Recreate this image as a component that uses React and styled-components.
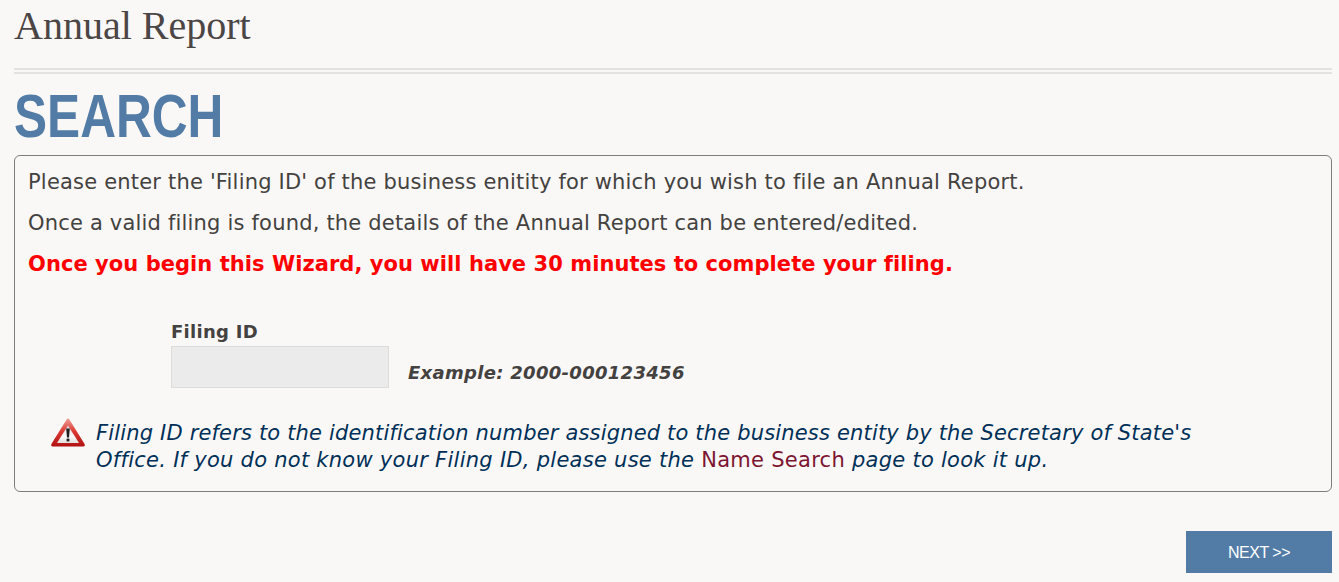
import React from "react";
import styled, { createGlobalStyle } from "styled-components";

const GlobalStyle = createGlobalStyle`
  html, body {
    margin: 0;
    padding: 0;
    background: #faf8f7;
  }
  body {
    font-family: "DejaVu Sans", Verdana, sans-serif;
    color: #444240;
  }
`;

const WarningIcon = () => (
  <svg width="36" height="31" viewBox="0 0 36 31">
    <defs>
      <linearGradient id="warnEdge" x1="0" y1="0" x2="0" y2="1">
        <stop offset="0" stopColor="#f0a09a" />
        <stop offset="0.45" stopColor="#dc3a34" />
        <stop offset="1" stopColor="#b01210" />
      </linearGradient>
      <linearGradient id="warnFill" x1="0" y1="0" x2="0" y2="1">
        <stop offset="0" stopColor="#d8d4d4" />
        <stop offset="0.6" stopColor="#fbfafa" />
        <stop offset="1" stopColor="#e4dede" />
      </linearGradient>
    </defs>
    <path d="M18 1.5 Q18.8 1.5 19.4 2.6 L34.6 27 Q35.4 29.5 33 29.5 L3 29.5 Q0.6 29.5 1.4 27 L16.6 2.6 Q17.2 1.5 18 1.5 Z" fill="url(#warnEdge)" />
    <path d="M18 8.5 L29 26 L7 26 Z" fill="url(#warnFill)" />
    <path d="M16.2 11.5 L19.8 11.5 L19 20.5 L17 20.5 Z" fill="#1e1e1e" />
    <rect x="16.6" y="21.6" width="2.8" height="2.8" fill="#1e1e1e" />
  </svg>
);

const App = () => (
  <Page>
    <GlobalStyle />
    <PageTitle>Annual Report</PageTitle>
    <DoubleRule />
    <SectionTitle>SEARCH</SectionTitle>
    <Panel>
      <Line>Please enter the 'Filing ID' of the business enitity for which you wish to file an Annual Report.</Line>
      <Line>Once a valid filing is found, the details of the Annual Report can be entered/edited.</Line>
      <Alert>Once you begin this Wizard, you will have 30 minutes to complete your filing.</Alert>
      <FieldRow>
        <Field>
          <FieldLabel htmlFor="filing-id">Filing ID</FieldLabel>
          <FieldInput id="filing-id" type="text" />
        </Field>
        <Example>Example: 2000-000123456</Example>
      </FieldRow>
      <Notice>
        <WarningIcon />
        <NoticeText>
          <NoticeLine $spacing="0.17px">
            Filing ID refers to the identification number assigned to the business entity by the Secretary of State's
          </NoticeLine>
          <NoticeLine $spacing="0.27px">
            Office. If you do not know your Filing ID, please use the <NoticeLink href="#">Name Search</NoticeLink> page to look it up.
          </NoticeLine>
        </NoticeText>
      </Notice>
    </Panel>
    <Actions>
      <NextButton type="button">NEXT &gt;&gt;</NextButton>
    </Actions>
  </Page>
);

export default App;

const Page = styled.div`
  box-sizing: border-box;
  width: 1339px;
  height: 582px;
  padding: 0 7px 0 14px;
  overflow: hidden;
`;

const PageTitle = styled.h1`
  margin: 0;
  padding-top: 5px;
  height: 68px;
  box-sizing: border-box;
  font-family: "Liberation Serif", Georgia, serif;
  font-size: 40px;
  line-height: 42px;
  font-weight: 400;
  color: #4b4645;
`;

const DoubleRule = styled.div`
  height: 6px;
  border-top: 2px solid #e4e2e1;
  border-bottom: 2px solid #e4e2e1;
  box-sizing: border-box;
`;

const SectionTitle = styled.h2`
  margin: 0;
  height: 81px;
  font-family: "Liberation Sans", Arial, sans-serif;
  font-size: 62px;
  line-height: 84px;
  font-weight: 700;
  color: #527ca6;
  transform: scaleX(0.8);
  transform-origin: left center;
`;

const Panel = styled.div`
  box-sizing: border-box;
  height: 337px;
  padding: 13px 12px 0 13px;
  border: 1px solid #7d7d7d;
  border-radius: 6px;
`;

const Line = styled.p`
  margin: 0 0 14px;
  font-size: 21px;
  line-height: 27px;
  letter-spacing: 0.19px;
`;

const Alert = styled(Line)`
  font-weight: 700;
  color: #fe0000;
  letter-spacing: 0.05px;
`;

const FieldRow = styled.div`
  display: flex;
  align-items: flex-end;
  gap: 19px;
  margin: 42px 0 0 143px;
`;

const Field = styled.div`
  display: flex;
  flex-direction: column;
`;

const FieldLabel = styled.label`
  font-size: 18px;
  line-height: 24px;
  font-weight: 700;
  letter-spacing: 0.3px;
  margin-bottom: 2px;
`;

const FieldInput = styled.input`
  box-sizing: border-box;
  width: 218px;
  height: 42px;
  padding: 0;
  background: #ebebeb;
  border: 1px solid #dcdcdc;
  outline: none;
`;

const Example = styled.span`
  font-size: 18px;
  line-height: 24px;
  font-weight: 700;
  font-style: italic;
  letter-spacing: 0.3px;
  padding-bottom: 3px;
`;

const Notice = styled.div`
  display: flex;
  align-items: flex-start;
  gap: 10px;
  margin: 29px 0 0 22px;
`;

const NoticeText = styled.div`
  margin-top: 3px;
  font-size: 21px;
  line-height: 27px;
  font-style: italic;
  color: #003057;
`;

const NoticeLine = styled.div`
  letter-spacing: ${({ $spacing }) => $spacing};
`;

const NoticeLink = styled.a`
  font-style: normal;
  color: #7c1530;
  text-decoration: none;
`;

const Actions = styled.div`
  display: flex;
  justify-content: flex-end;
  margin-top: 39px;
`;

const NextButton = styled.button`
  width: 146px;
  height: 42px;
  padding: 1px 0 0;
  border: none;
  background: #527ca6;
  color: #fff;
  font-family: "Liberation Sans", Arial, sans-serif;
  font-size: 16px;
  letter-spacing: -0.5px;
`;
